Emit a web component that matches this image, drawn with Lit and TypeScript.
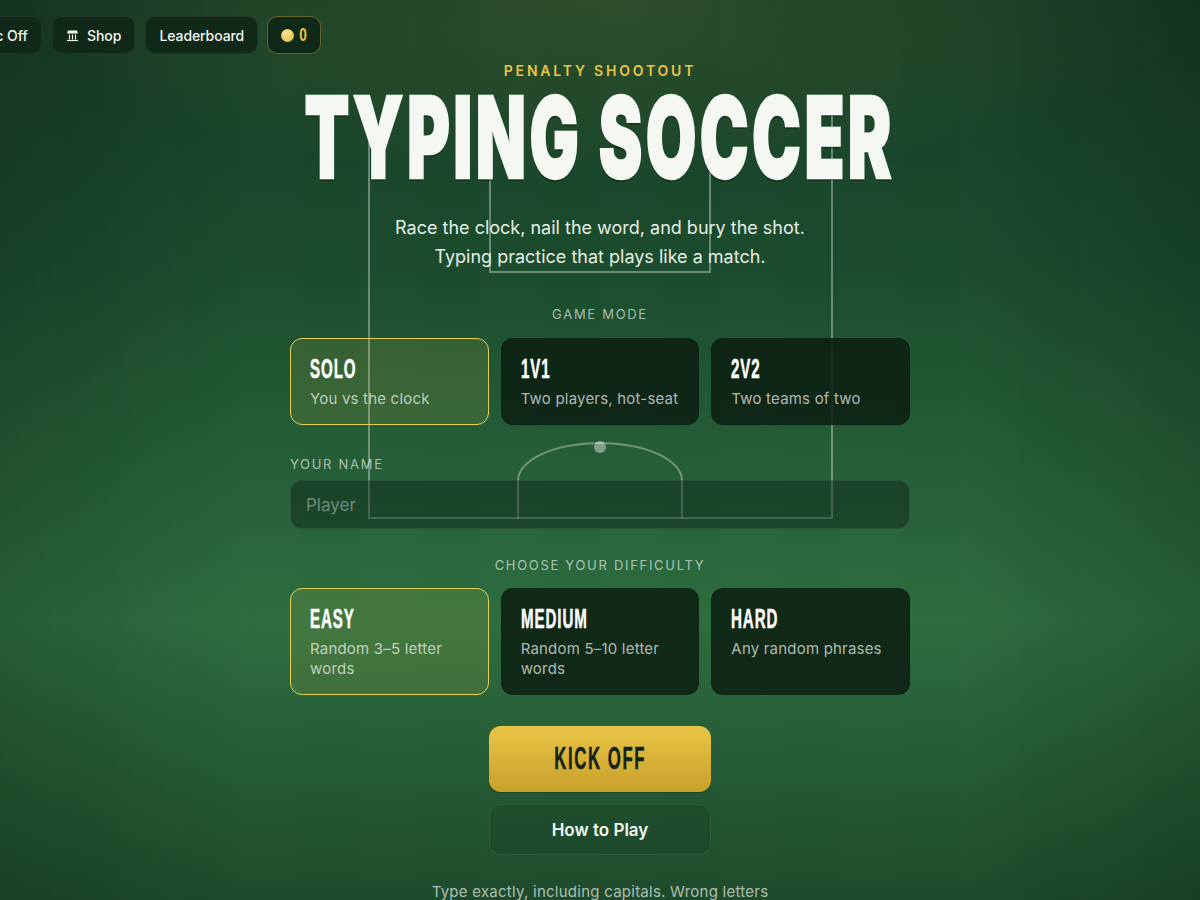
import { LitElement, html, css } from "lit";
import { customElement } from "lit/decorators.js";

@customElement("app-root")
export class AppRoot extends LitElement {
  static styles = css`
    :host { display: block; width: 1200px; height: 900px; overflow: hidden; position: relative; font-family: "Inter", "DejaVu Sans", sans-serif; color: #f4f7f2;
      background:
        radial-gradient(ellipse 50% 20% at 50% 0%, rgba(232,197,71,0.11), rgba(232,197,71,0) 100%),
        linear-gradient(90deg, rgba(0,0,0,0.16) 0%, rgba(0,0,0,0) 20%, rgba(0,0,0,0) 80%, rgba(0,0,0,0.16) 100%),
        repeating-linear-gradient(90deg, rgba(255,255,255,0.004) 0 60px, rgba(0,0,0,0.004) 60px 120px),
        linear-gradient(180deg, #163d25 0%, #1b4c2d 30%, #2d6d3f 69%, #1d4a2b 100%);
    }
    * { box-sizing: border-box; }
    .pitch { position: absolute; left: 0; top: 0; width: 1200px; height: 900px; pointer-events: none; }
    .box { position: absolute; border: 2px solid rgba(255,255,255,0.35); border-top: 0; }
    .outer { left: 368px; top: 105px; width: 465px; height: 414px; }
    .inner { left: 489px; top: 130px; width: 222px; height: 143px; }
    .arc { position: absolute; left: 517px; top: 442px; width: 166px; height: 77px; border: 2px solid rgba(255,255,255,0.35); border-bottom: 0; border-radius: 50% 50% 0 0; }
    .spot { position: absolute; left: 594px; top: 441px; width: 12px; height: 12px; border-radius: 50%; background: rgba(255,255,255,0.42); }
    .content { position: relative; display: flex; flex-direction: column; align-items: center; }
    .nav { align-self: flex-start; display: flex; gap: 10px; margin: 16px 0 0 -51px; height: 38px; }
    .btn { display: flex; align-items: center; gap: 8px; padding: 0 13px; border-radius: 10px; background: #102818; border: 1px solid rgba(255,255,255,0.06); font-size: 14px; font-weight: 500; color: #f2f5f0; white-space: nowrap; }
    .btn svg { display: block; }
    .lead { letter-spacing: -0.1px; }
    .coins { border-color: rgba(232,197,71,0.38); gap: 4px; margin-left: -1px; }
    .coin { width: 13px; height: 13px; border-radius: 50%; background: radial-gradient(circle at 40% 35%, #f9e595, #dcb63f); }
    .coin-n { display: block; width: 9px; text-align: center; font-family: "Liberation Sans", sans-serif; color: #e8c547; font-size: 19px; font-weight: 700; transform: scaleX(0.72); }
    .eyebrow { margin-top: 8px; font-size: 14px; font-weight: 600; letter-spacing: 2.8px; color: #e8c547; height: 17px; line-height: 17px; }
    .title { height: 100px; margin-top: 8px; display: flex; justify-content: center; width: 100%; }
    .title span { display: block; flex: none; white-space: nowrap; font-family: "Inter", sans-serif; font-weight: 900; font-size: 113px; line-height: 100px; color: #f4f7f2; transform: scaleX(0.578); letter-spacing: 6px; text-shadow: 0 3px 0 rgba(0,0,0,0.3); -webkit-text-stroke: 2.5px #f4f7f2; }
    .sub { margin-top: 26px; text-align: center; font-size: 18px; line-height: 29px; color: #e7eee5; }
    .label { font-size: 13px; letter-spacing: 1.7px; color: rgba(255,255,255,0.62); height: 16px; line-height: 16px; }
    .mode-label { margin-top: 35px; }
    .grid { width: 620px; display: grid; grid-template-columns: repeat(3, 1fr); gap: 12px; margin-top: 16px; }
    .grid.diff { margin-top: 15px; }
    .card { border-radius: 12px; padding: 17px 19px 0; border: 1px solid rgba(0,0,0,0.1); background: rgba(12,30,18,0.86); height: 87px; }
    .card.tall { height: 107px; }
    .card.on { background: rgba(232,197,71,0.12); border-color: #e3cf55; }
    .card b { display: block; height: 26px; line-height: 26px; font-family: "Liberation Sans", sans-serif; font-weight: 700; font-size: 27px; letter-spacing: 1.6px; color: #fff; transform: scaleX(0.56); transform-origin: left; white-space: nowrap; -webkit-text-stroke: 0.5px #fff; }
    .card p { margin: 7px 0 0; font-size: 15px; line-height: 20px; letter-spacing: 0.2px; color: rgba(255,255,255,0.68); }
    .name { width: 620px; margin-top: 31px; }
    .name .label { display: block; }
    .input { margin-top: 8px; height: 49px; border-radius: 12px; background: rgba(9,28,18,0.42); border: 1px solid rgba(255,255,255,0.08); padding: 0 15px; display: flex; align-items: center; font-size: 17px; color: rgba(255,255,255,0.38); }
    .diff-label { margin-top: 28px; }
    .kick { margin-top: 31px; width: 222px; height: 66px; border-radius: 12px; background: linear-gradient(180deg, #e8c547, #c9a02a); display: flex; align-items: center; justify-content: center; box-shadow: 0 1px 0 rgba(0,0,0,0.2); }
    .kick span { display: block; flex: none; font-family: "Liberation Sans", sans-serif; font-weight: 700; font-size: 31px; letter-spacing: 3px; color: #14231a; transform: scaleX(0.54); white-space: nowrap; -webkit-text-stroke: 0.5px #14231a; }
    .how { margin-top: 12px; width: 222px; height: 51px; border-radius: 12px; background: rgba(9,28,18,0.14); border: 1px solid rgba(255,255,255,0.08); display: flex; align-items: center; justify-content: center; font-size: 17px; font-weight: 600; color: #f4f7f2; }
    .foot { margin-top: 27px; font-size: 15px; line-height: 20px; letter-spacing: 0.25px; color: rgba(255,255,255,0.65); text-align: center; }
  `;

  render() {
    return html`
      <div class="pitch">
        <div class="box outer"></div>
        <div class="box inner"></div>
        <div class="arc"></div>
        <div class="spot"></div>
      </div>
      <div class="content">
        <div class="nav">
          <div class="btn">Music Off</div>
          <div class="btn">
            <svg width="13" height="13" viewBox="0 0 13 13" fill="none">
              <path d="M2 1.5h9l1 3H1z" fill="#f2f5f0"/>
              <path d="M1 11.5h11" stroke="#f2f5f0" stroke-width="1.2"/>
              <path d="M3.5 5.5v5M6.5 5.5v5M9.5 5.5v5" stroke="#f2f5f0" stroke-width="1.1"/>
            </svg>
            Shop
          </div>
          <div class="btn lead">Leaderboard</div>
          <div class="btn coins"><span class="coin"></span><span class="coin-n">0</span></div>
        </div>
        <div class="eyebrow">PENALTY SHOOTOUT</div>
        <div class="title"><span>TYPING SOCCER</span></div>
        <div class="sub">Race the clock, nail the word, and bury the shot.<br />Typing practice that plays like a match.</div>
        <div class="label mode-label">GAME MODE</div>
        <div class="grid">
          <div class="card on"><b>SOLO</b><p>You vs the clock</p></div>
          <div class="card"><b>1V1</b><p>Two players, hot-seat</p></div>
          <div class="card"><b>2V2</b><p>Two teams of two</p></div>
        </div>
        <div class="name">
          <span class="label">YOUR NAME</span>
          <div class="input">Player</div>
        </div>
        <div class="label diff-label">CHOOSE YOUR DIFFICULTY</div>
        <div class="grid diff">
          <div class="card tall on"><b>EASY</b><p>Random 3–5 letter words</p></div>
          <div class="card tall"><b>MEDIUM</b><p>Random 5–10 letter words</p></div>
          <div class="card tall"><b>HARD</b><p>Any random phrases</p></div>
        </div>
        <div class="kick"><span>KICK OFF</span></div>
        <div class="how">How to Play</div>
        <div class="foot">Type exactly, including capitals. Wrong letters</div>
      </div>
    `;
  }
}
